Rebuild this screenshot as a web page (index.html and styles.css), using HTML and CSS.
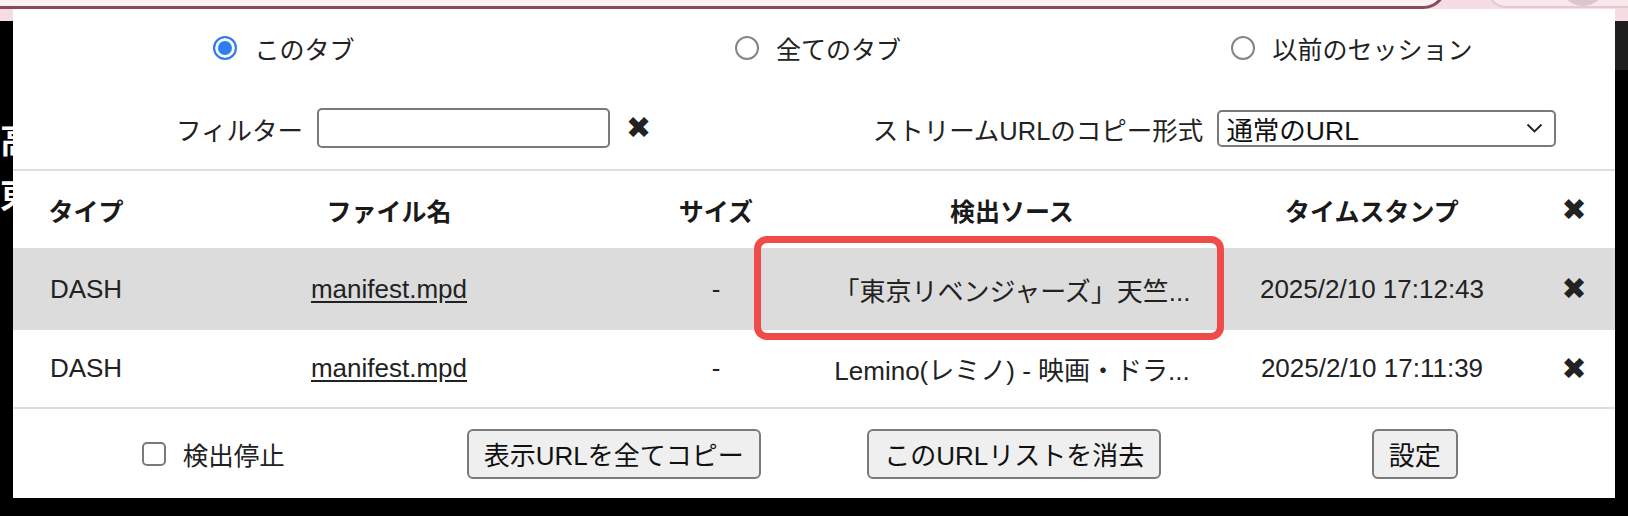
FILE: index.html
```html
<!DOCTYPE html>
<html lang="ja">
<head>
<meta charset="utf-8">
<title>Stream list</title>
<link rel="stylesheet" href="styles.css">
</head>
<body>
  <div class="chrome">
    <div class="omnibox"></div>
    <div class="pill"></div>
    <div class="avatar"></div>
  </div>
  <div class="band"></div>
  <div class="bgtext">高<br>東</div>

  <div class="popup">
    <div class="scope">
      <label class="opt"><span class="radio on"></span>このタブ</label>
      <label class="opt"><span class="radio"></span>全てのタブ</label>
      <label class="opt"><span class="radio"></span>以前のセッション</label>
    </div>
    <div class="filters">
      <div class="fgroup">
        <span class="flabel">フィルター</span>
        <span class="input"></span>
        <span class="xmark">✖</span>
      </div>
      <div class="fgroup">
        <span class="flabel">ストリームURLのコピー形式</span>
        <span class="select">通常のURL
          <svg class="chev" width="17" height="10" viewBox="0 0 17 10"><path d="M1.5 1.5 L8.5 8.5 L15.5 1.5" fill="none" stroke="#222" stroke-width="1.8"/></svg>
        </span>
      </div>
    </div>
    <div class="sep"></div>
    <div class="table">
      <div class="row head">
        <span>タイプ</span>
        <span>ファイル名</span>
        <span class="size">サイズ</span>
        <span>検出ソース</span>
        <span>タイムスタンプ</span>
        <span class="xmark">✖</span>
      </div>
      <div class="row sel">
        <span>DASH</span>
        <span class="link">manifest.mpd</span>
        <span>-</span>
        <span>「東京リベンジャーズ」天竺...</span>
        <span>2025/2/10 17:12:43</span>
        <span class="xmark">✖</span>
      </div>
      <div class="row plain">
        <span>DASH</span>
        <span class="link">manifest.mpd</span>
        <span>-</span>
        <span>Lemino(レミノ) - 映画・ドラ...</span>
        <span>2025/2/10 17:11:39</span>
        <span class="xmark">✖</span>
      </div>
    </div>
    <div class="sep"></div>
    <div class="footer">
      <label class="opt"><span class="check"></span>検出停止</label>
      <button class="btn">表示URLを全てコピー</button>
      <button class="btn">このURLリストを消去</button>
      <button class="btn">設定</button>
    </div>
    <div class="highlight"></div>
  </div>
</body>
</html>
```

FILE: styles.css
```css
html, body {
  margin: 0;
  padding: 0;
}
body {
  width: 1628px;
  height: 516px;
  overflow: hidden;
  position: relative;
  background: #000;
  font-family: "Liberation Sans", "Noto Sans CJK JP", sans-serif;
  color: #222;
}

/* browser chrome behind the popup */
.chrome {
  height: 21px;
  background: #f6dde3;
  position: relative;
  overflow: hidden;
}
.omnibox {
  position: absolute;
  left: -40px;
  top: -40px;
  width: 1481px;
  height: 43px;
  border: 3px solid #8b4a5c;
  border-radius: 24px;
  background: #fdf0f3;
}
.pill {
  position: absolute;
  left: 1487px;
  top: -30px;
  width: 170px;
  height: 34px;
  border: 2px solid #e6c9d0;
  border-radius: 20px;
  background: #f9e7eb;
}
.avatar {
  position: absolute;
  left: 1560px;
  top: -40px;
  width: 46px;
  height: 46px;
  border-radius: 50%;
  background: #dcc6cc;
}
.band {
  position: absolute;
  left: 1600px;
  top: 21px;
  width: 28px;
  height: 49px;
  background: #1e1e1e;
}
.bgtext {
  position: absolute;
  left: 0;
  top: 114px;
  color: #fff;
  font-weight: bold;
  font-size: 34px;
  line-height: 55px;
}

/* popup */
.popup {
  position: absolute;
  left: 13px;
  top: 9px;
  width: 1602px;
  height: 489px;
  background: #fff;
  display: flex;
  flex-direction: column;
}
.opt {
  display: flex;
  align-items: center;
  gap: 17px;
  font-size: 25px;
  color: #222;
}
.scope {
  height: 78px;
  display: grid;
  grid-template-columns: repeat(3, 1fr);
  align-items: center;
  justify-items: center;
}
.scope .opt {
  margin-left: 8px;
}
.radio {
  width: 20px;
  height: 20px;
  border: 2px solid #858585;
  border-radius: 50%;
  background: #fff;
  flex: none;
}
.radio.on {
  border-color: #2f7df2;
  background: #2f7df2;
  box-shadow: inset 0 0 0 3px #fff;
}
.filters {
  height: 82px;
  display: grid;
  grid-template-columns: 1fr 1fr;
  align-items: center;
  justify-items: center;
}
.fgroup {
  display: flex;
  align-items: center;
  font-size: 25.5px;
}
.flabel {
  margin-right: 14px;
}
.input {
  width: 289px;
  height: 36px;
  border: 2px solid #7a7a7a;
  border-radius: 5px;
  margin-right: 16px;
}
.select {
  width: 328px;
  height: 33px;
  border: 2px solid #7a7a7a;
  border-radius: 5px;
  padding: 0 0 0 7px;
  display: flex;
  align-items: center;
  justify-content: space-between;
  color: #111;
  font-size: 26.5px;
}
.chev {
  margin-right: 11px;
}
.xmark {
  font-family: "DejaVu Sans", sans-serif;
  font-size: 30px;
  line-height: 1;
  color: #222;
}
.sep {
  height: 2px;
  background: #dedede;
  flex: none;
}

/* table */
.row {
  display: grid;
  grid-template-columns: 146px 460px 194px 398px 322px 1fr;
  align-items: center;
  justify-items: center;
  font-size: 26px;
  color: #222;
}
.row.head {
  height: 77px;
  font-size: 25px;
  font-weight: bold;
  color: #1a1a1a;
}
.row.sel {
  height: 82px;
  background: #dcdcdc;
}
.row.plain {
  height: 77px;
}
.link {
  text-decoration: underline;
  text-underline-offset: 3px;
}

/* footer */
.footer {
  height: 89px;
  display: grid;
  grid-template-columns: repeat(4, 1fr);
  align-items: center;
  justify-items: center;
}
.footer .opt {
  font-size: 25.5px;
}
.check {
  width: 20px;
  height: 20px;
  border: 2px solid #7a7a7a;
  border-radius: 5px;
  background: #fff;
}
.btn {
  height: 50px;
  padding: 0 15px;
  border: 2px solid #7a7a7a;
  border-radius: 6px;
  background: #efefef;
  font-family: "Liberation Sans", "Noto Sans CJK JP", sans-serif;
  font-size: 26px;
  color: #111;
}

/* annotation overlay */
.highlight {
  position: absolute;
  left: 741px;
  top: 227px;
  width: 470px;
  height: 104px;
  box-sizing: border-box;
  border: 7px solid #f04b4b;
  border-radius: 13px;
}
```
